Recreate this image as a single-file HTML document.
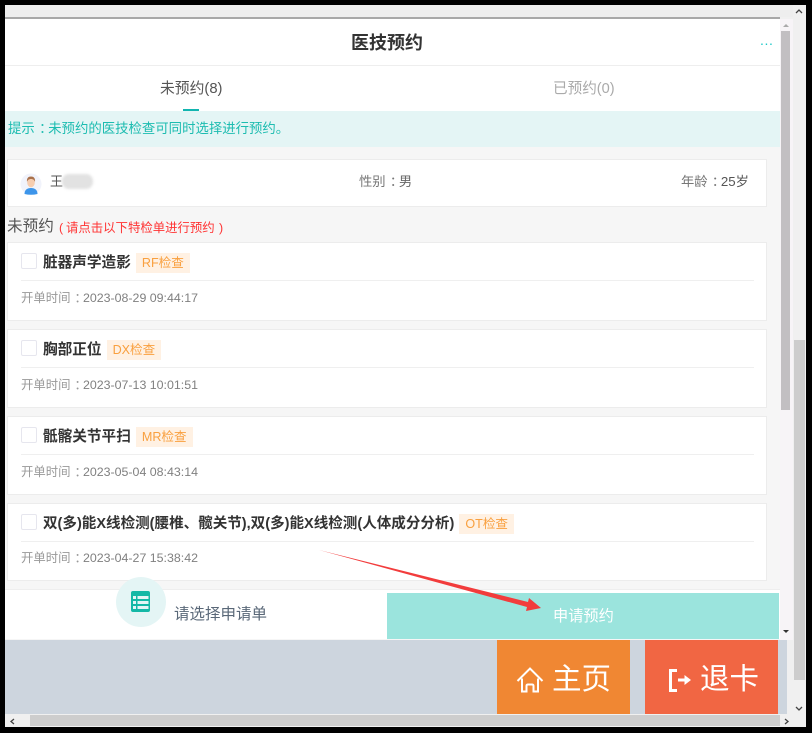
<!DOCTYPE html>
<html lang="zh"><head><meta charset="utf-8"><style>
html,body{margin:0;padding:0;background:#000}
body{width:812px;height:733px;position:relative;overflow:hidden;font-family:"Liberation Sans","Noto Sans CJK SC",sans-serif}
.a{position:absolute;white-space:nowrap}
.c{display:inline-block;transform:translateX(.32em)}
.card{position:absolute;left:7px;width:758px;background:#fff;border:1px solid #ececec}
.cb{position:absolute;left:13px;top:10px;width:14px;height:14px;border:1px solid #e6e6ee;border-radius:2px;background:#fff}
.t{position:absolute;left:35px;top:10px;font-size:14.65px;font-weight:bold;color:#333;line-height:20px;white-space:nowrap}
.tag{font-weight:normal;display:inline-block;background:#fff1e3;color:#f9a03f;font-size:12.6px;line-height:20px;height:20px;padding:0 6px;margin-left:5px;vertical-align:top}
.ln{position:absolute;left:13px;right:12px;top:37px;height:1px;background:#efefef}
.d{position:absolute;left:13px;top:46px;font-size:12.4px;line-height:17px;color:#999;white-space:nowrap}
.d b{font-weight:normal;color:#808080}
</style></head><body>
<div class="a" style="left:5px;top:5px;width:801px;height:722px;background:#f0f0f0"></div>
<div class="a" style="left:5px;top:5px;width:788px;height:12px;background:#eee"></div>
<div class="a" style="left:5px;top:17px;width:775px;height:2px;background:#a8a8a8"></div>
<div class="a" style="left:5px;top:19px;width:775px;height:621px;background:#f6f6f6"></div>
<div class="a" style="left:5px;top:19px;width:775px;height:46px;background:#fff"></div>
<div class="a" style="left:5px;top:65px;width:775px;height:1px;background:#eee"></div>
<div class="a" style="left:5px;top:66px;width:775px;height:45px;background:#fff"></div>
<div class="a" style="left:351px;top:31px;font-size:18px;font-weight:bold;line-height:24px;color:#333">医技预约</div>
<div class="a" style="left:760px;top:31px;font-size:14px;line-height:18px;color:#1cc8c8;letter-spacing:.6px">...</div>
<div class="a" style="left:160px;top:79px;font-size:14.8px;line-height:20px;color:#555">未预约(8)</div>
<div class="a" style="left:183px;top:109px;width:16px;height:2px;background:#12b5b0"></div>
<div class="a" style="left:553px;top:79px;font-size:14.6px;line-height:20px;color:#aaa">已预约(0)</div>
<div class="a" style="left:5px;top:111px;width:775px;height:36px;background:#e4f5f5"></div>
<div class="a" style="left:8px;top:120px;font-size:13.4px;line-height:18px;color:#1cbcb0">提示<span class="c">：</span>未预约的医技检查可同时选择进行预约。</div>

<div class="card" style="top:159px;height:46px"></div>
<svg class="a" style="left:20px;top:173px" width="22" height="22" viewBox="0 0 22 22"><circle cx="11" cy="11" r="10.500" fill="#f1f3fb"/><path d="M4.500 21c0-4 2.500-6 6.500-6s6.500 2 6.500 6q-6.500 1.500-13 0z" fill="#3d95ea"/><ellipse cx="11" cy="9.500" rx="3.800" ry="4.800" fill="#f6cdb0"/><path d="M7 9c-.5-4 1.500-5.500 4-5.500S15.500 5 15 9c-.5-2-2-3-4-3S7.500 7 7 9z" fill="#a9714b"/></svg>
<div class="a" style="left:50px;top:173px;font-size:13px;line-height:18px;color:#555">王</div>
<div class="a" style="left:62px;top:174px;width:31px;height:15px;border-radius:7px;background:#e2e2e2;filter:blur(1.2px)"></div>
<div class="a" style="left:359px;top:173px;font-size:13.3px;line-height:18px;color:#777">性别<span class="c">：</span><span style="color:#666">男</span></div>
<div class="a" style="left:681px;top:173px;font-size:13.3px;line-height:18px;color:#777">年龄<span class="c">：</span><span style="color:#555">25岁</span></div>

<div class="a" style="left:7px;top:217px;font-size:15.6px;line-height:20px;color:#555">未预约</div>
<div class="a" style="left:59px;top:219px;font-size:12.4px;line-height:18px;color:#f33">(</div>
<div class="a" style="left:66px;top:219px;font-size:12.4px;line-height:18px;color:#f33">请点击以下特检单进行预约</div>
<div class="a" style="left:219px;top:219px;font-size:12.4px;line-height:18px;color:#f33">)</div>

<div class="card" style="top:242px;height:77px"><div class="cb"></div><div class="t">脏器声学造影<span class="tag">RF检查</span></div><div class="ln"></div><div class="d" style="top:47px">开单时间<span class="c">：</span><b>2023-08-29 09:44:17</b></div></div>
<div class="card" style="top:329px;height:77px"><div class="cb"></div><div class="t">胸部正位<span class="tag">DX检查</span></div><div class="ln"></div><div class="d" style="top:47px">开单时间<span class="c">：</span><b>2023-07-13 10:01:51</b></div></div>
<div class="card" style="top:416px;height:77px"><div class="cb"></div><div class="t">骶髂关节平扫<span class="tag">MR检查</span></div><div class="ln"></div><div class="d" style="top:47px">开单时间<span class="c">：</span><b>2023-05-04 08:43:14</b></div></div>
<div class="card" style="top:503px;height:76px"><div class="cb"></div><div class="t" style="font-size:14.55px">双(多)能X线检测(腰椎、髋关节),双(多)能X线检测(人体成分分析)<span class="tag">OT检查</span></div><div class="ln"></div><div class="d">开单时间<span class="c">：</span><b>2023-04-27 15:38:42</b></div></div>

<div class="a" style="left:5px;top:589px;width:775px;height:50px;background:#fff;border-top:1px solid #eee;box-sizing:border-box"></div>
<div class="a" style="left:116px;top:577px;width:50px;height:50px;border-radius:50%;background:#e4f5f5"></div>
<svg class="a" style="left:131px;top:591px" width="19" height="21" viewBox="0 0 19 21"><rect width="19" height="21" rx="2" fill="#14b8a6"/><g fill="#e4f5f5"><rect x="2" y="5" width="3" height="3"/><rect x="6.500" y="5" width="11" height="3"/><rect x="2" y="10" width="3" height="3"/><rect x="6.500" y="10" width="11" height="3"/><rect x="2" y="15" width="3" height="3"/><rect x="6.500" y="15" width="11" height="3"/></g></svg>
<div class="a" style="left:174px;top:605px;font-size:15.5px;line-height:20px;color:#5a6878">请选择申请单</div>
<div class="a" style="left:387px;top:593px;width:392px;height:46px;background:#9be4dd"></div>
<div class="a" style="left:553px;top:607px;font-size:15.2px;line-height:20px;color:#fff">申请预约</div>

<div class="a" style="left:5px;top:640px;width:782px;height:74px;background:#cdd5de"></div>
<div class="a" style="left:497px;top:640px;width:133px;height:74px;background:#f08733"></div>
<div class="a" style="left:645px;top:640px;width:133px;height:74px;background:#f16643"></div>
<svg class="a" style="left:516px;top:667px" width="28" height="28" viewBox="0 0 28 28" fill="none" stroke="#fff" stroke-width="2"><path d="M1.500 14 14 1.500 26.500 14M6 11.500v13h4.500v-5.500q0-1.500 1.500-1.500h4q1.500 0 1.500 1.500v5.500H22v-13"/></svg>
<div class="a" style="left:552px;top:660px;font-size:29.5px;line-height:40px;color:#fff">主页</div>
<svg class="a" style="left:667px;top:668px" width="26" height="26" viewBox="0 0 26 26" fill="none" stroke="#fff"><path d="M10 2.500H3.500v20H10" stroke-width="3"/><path d="M11 12h7" stroke-width="3"/><path d="M17.500 7l6.500 5-6.500 5z" fill="#fff" stroke="none"/></svg>
<div class="a" style="left:700px;top:660px;font-size:29.5px;line-height:40px;color:#fff">退卡</div>

<div class="a" style="left:780px;top:19px;width:13px;height:621px;background:#f7f4f7"></div>
<div class="a" style="left:781px;top:31px;width:9px;height:379px;background:#c2bfc2"></div>
<div class="a" style="left:783px;top:24px;width:0;height:0;border:3px solid transparent;border-bottom-color:#aaa;border-top:0"></div>
<div class="a" style="left:783px;top:630px;width:0;height:0;border:3px solid transparent;border-top-color:#333;border-bottom:0"></div>
<div class="a" style="left:794px;top:340px;width:11px;height:340px;background:#cdcdcd"></div>
<div class="a" style="left:30px;top:715px;width:750px;height:11px;background:#cdcdcd"></div>
<svg class="a" style="left:0;top:0" width="812" height="733" fill="none" stroke="#444" stroke-width="1.300"><path d="M796 13l3-3 3 3M796 707l3 3 3-3M14 719l-3 2.500 3 2.500M785 719l3 2.500-3 2.500"/></svg>

<svg class="a" style="left:0;top:0" width="812" height="733"><path d="M319 550 528 602 529 598 541 608 526 611 527 607z" fill="#f23c3c"/></svg>
<div class="a" style="left:0;top:0;width:812px;height:5px;background:#000"></div>
<div class="a" style="left:0;top:0;width:5px;height:733px;background:#000"></div>
<div class="a" style="left:806px;top:0;width:6px;height:733px;background:#000"></div>
<div class="a" style="left:0;top:727px;width:812px;height:6px;background:#000"></div>
</body></html>
